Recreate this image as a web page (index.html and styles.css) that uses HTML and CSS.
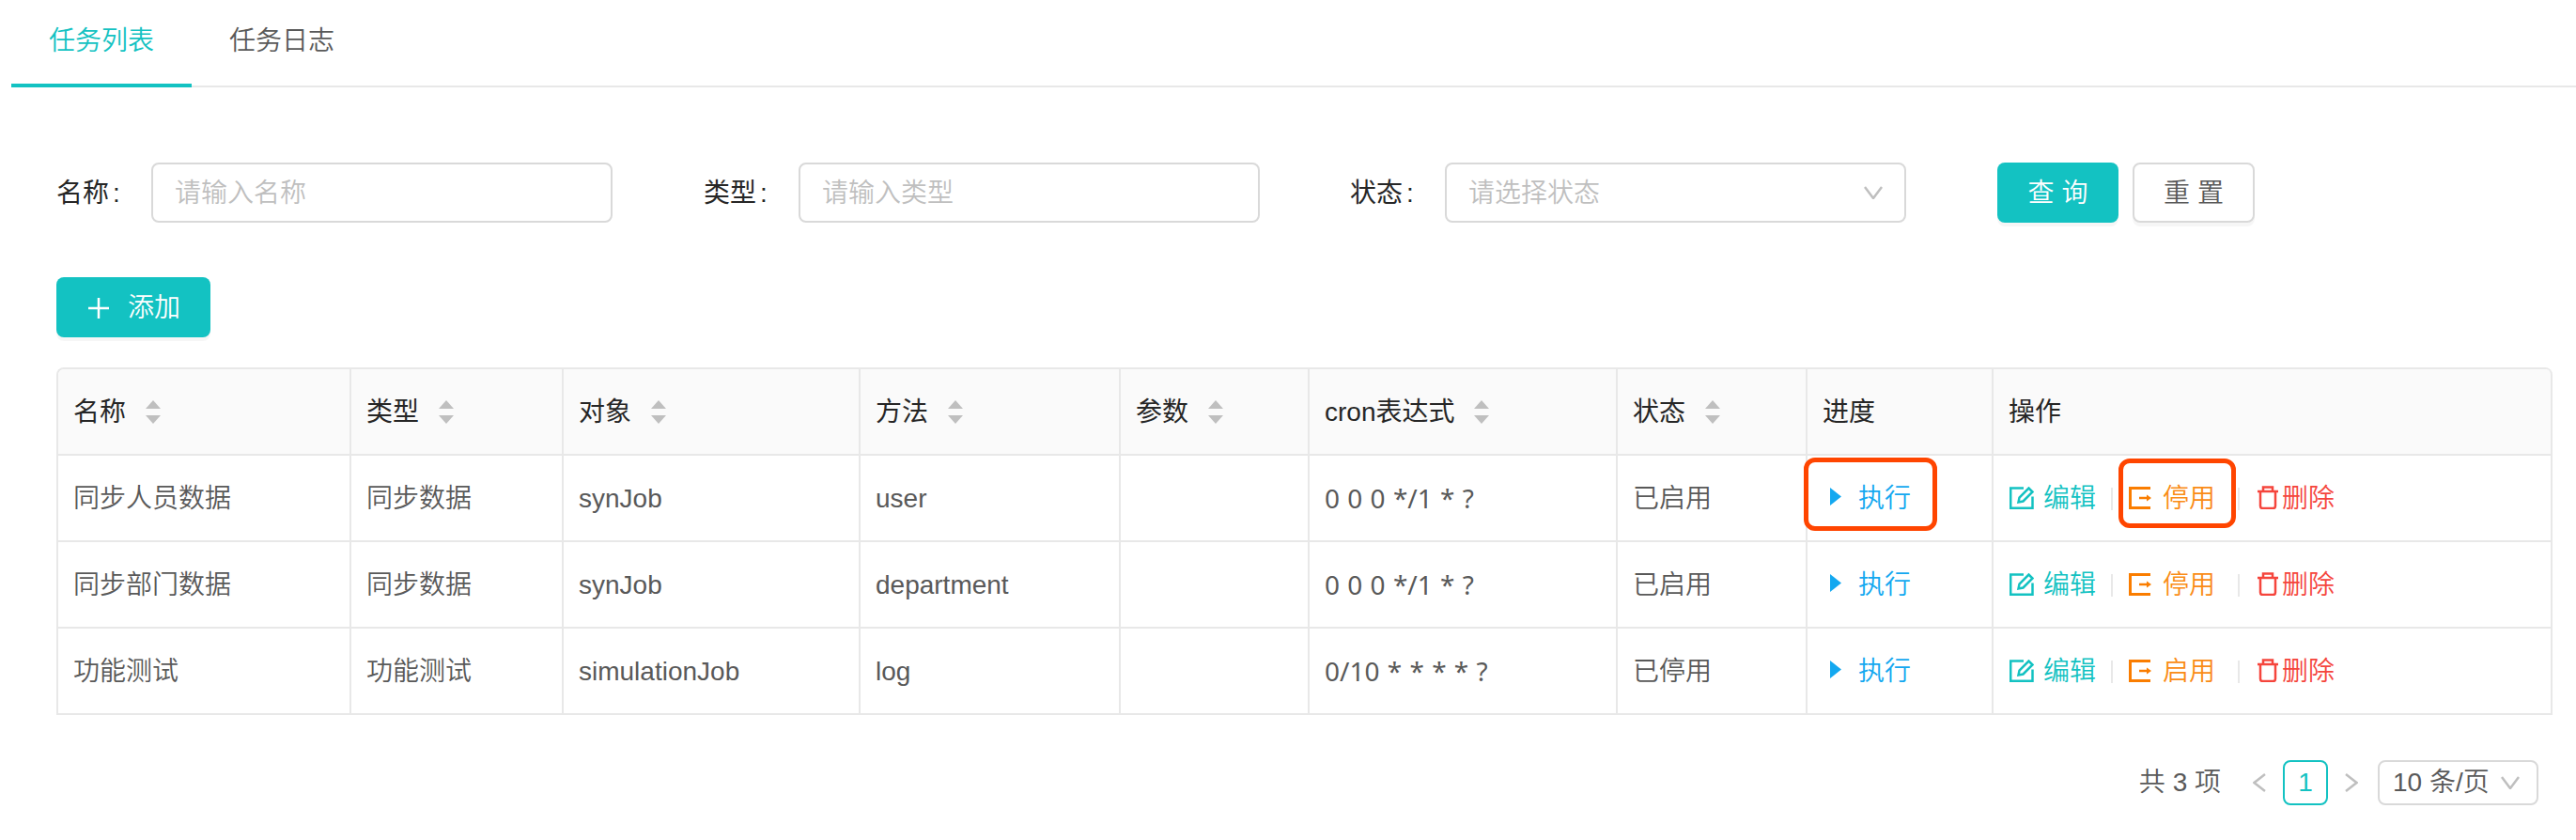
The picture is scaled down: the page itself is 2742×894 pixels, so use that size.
FILE: index.html
```html
<!DOCTYPE html>
<html lang="zh">
<head>
<meta charset="utf-8">
<title>任务列表</title>
<link rel="stylesheet" href="styles.css">
</head>
<body>
<svg class="defs" width="0" height="0" aria-hidden="true">
  <defs>
    <symbol id="sort" viewBox="0 0 16 25"><path d="M8 0 16 9H0Z"/><path d="M0 16H16L8 25Z"/></symbol>
    <symbol id="play" viewBox="0 0 12 19"><path d="M0 0 12 9.500 0 19Z"/></symbol>
    <symbol id="edit" viewBox="0 0 26 24"><path class="ln" d="M15 1.500H1.200V22.800H24.500V10.500"/><path class="ln" d="M9.500 16.500 10.500 11.500 20.500 1.500 24.500 5.500 14.500 15.500Z"/></symbol>
    <symbol id="exit" viewBox="0 0 24 24"><path class="ln3" d="M23 1.500H1.500V22.500H23"/><path class="ln2" d="M11 12H21"/><path d="M19 8.500 24 12 19 15.500Z"/></symbol>
    <symbol id="trash" viewBox="0 0 24 25"><path class="ln" d="M1 6H23"/><path class="ln" d="M7 6V1.500H17V6"/><path class="ln" d="M4 6V21.500Q4 24 6.500 24H17.500Q20 24 20 21.500V6"/></symbol>
    <symbol id="down" viewBox="0 0 20 14"><path class="ln" d="M1 1 10 13 19 1"/></symbol>
    <symbol id="left" viewBox="0 0 14 20"><path class="ln" d="M13 1 1.500 10 13 19"/></symbol>
    <symbol id="right" viewBox="0 0 14 20"><path class="ln" d="M1 1 12.500 10 1 19"/></symbol>
    <symbol id="plus" viewBox="0 0 22 22"><path class="ln" d="M11 0V22M0 11H22"/></symbol>
  </defs>
</svg>

<nav class="tabs">
  <a class="tab tab-active">任务列表</a>
  <a class="tab">任务日志</a>
</nav>

<main class="content">
  <form class="filters">
    <div class="field">
      <label class="field-label">名称<span class="colon">:</span></label>
      <div class="input"><span class="placeholder">请输入名称</span></div>
    </div>
    <div class="field">
      <label class="field-label">类型<span class="colon">:</span></label>
      <div class="input"><span class="placeholder">请输入类型</span></div>
    </div>
    <div class="field">
      <label class="field-label">状态<span class="colon">:</span></label>
      <div class="input input-select"><span class="placeholder">请选择状态</span><svg class="chev-select"><use href="#down"/></svg></div>
    </div>
    <div class="field-actions">
      <span class="btn btn-primary btn-query">查 询</span>
      <span class="btn btn-default btn-query">重 置</span>
    </div>
  </form>

  <div class="toolbar">
    <span class="btn btn-primary btn-add"><svg class="plus"><use href="#plus"/></svg>添加</span>
  </div>

  <div class="table-wrap">
    <table class="table">
      <colgroup>
        <col class="c1"><col class="c2"><col class="c3"><col class="c4"><col class="c5"><col class="c6"><col class="c7"><col class="c8"><col class="c9">
      </colgroup>
      <thead>
        <tr>
          <th><span class="th-in">名称<svg class="sort"><use href="#sort"/></svg></span></th>
          <th><span class="th-in">类型<svg class="sort"><use href="#sort"/></svg></span></th>
          <th><span class="th-in">对象<svg class="sort"><use href="#sort"/></svg></span></th>
          <th><span class="th-in">方法<svg class="sort"><use href="#sort"/></svg></span></th>
          <th><span class="th-in">参数<svg class="sort"><use href="#sort"/></svg></span></th>
          <th><span class="th-in">cron表达式<svg class="sort"><use href="#sort"/></svg></span></th>
          <th><span class="th-in">状态<svg class="sort"><use href="#sort"/></svg></span></th>
          <th>进度</th>
          <th>操作</th>
        </tr>
      </thead>
      <tbody>
        <tr>
          <td>同步人员数据</td><td>同步数据</td><td>synJob</td><td>user</td><td></td><td class="cron">0 0 0 */1 * ?</td><td>已启用</td>
          <td><span class="run"><svg class="i-play"><use href="#play"/></svg>执行</span></td>
          <td><div class="ops">
            <span class="op op-edit"><svg class="i-edit"><use href="#edit"/></svg>编辑</span><i class="sep sep-a"></i>
            <span class="op op-stop"><svg class="i-exit"><use href="#exit"/></svg>停用</span><i class="sep sep-b"></i>
            <span class="op op-del"><svg class="i-trash"><use href="#trash"/></svg>删除</span>
          </div></td>
        </tr>
        <tr>
          <td>同步部门数据</td><td>同步数据</td><td>synJob</td><td>department</td><td></td><td class="cron">0 0 0 */1 * ?</td><td>已启用</td>
          <td><span class="run"><svg class="i-play"><use href="#play"/></svg>执行</span></td>
          <td><div class="ops">
            <span class="op op-edit"><svg class="i-edit"><use href="#edit"/></svg>编辑</span><i class="sep sep-a"></i>
            <span class="op op-stop"><svg class="i-exit"><use href="#exit"/></svg>停用</span><i class="sep sep-b"></i>
            <span class="op op-del"><svg class="i-trash"><use href="#trash"/></svg>删除</span>
          </div></td>
        </tr>
        <tr>
          <td>功能测试</td><td>功能测试</td><td>simulationJob</td><td>log</td><td></td><td class="cron">0/10 * * * * ?</td><td>已停用</td>
          <td><span class="run"><svg class="i-play"><use href="#play"/></svg>执行</span></td>
          <td><div class="ops">
            <span class="op op-edit"><svg class="i-edit"><use href="#edit"/></svg>编辑</span><i class="sep sep-a"></i>
            <span class="op op-stop"><svg class="i-exit"><use href="#exit"/></svg>启用</span><i class="sep sep-b"></i>
            <span class="op op-del"><svg class="i-trash"><use href="#trash"/></svg>删除</span>
          </div></td>
        </tr>
      </tbody>
    </table>
    <div class="mark mark-run"></div>
    <div class="mark mark-stop"></div>
  </div>

  <div class="pager">
    <span class="pager-total">共 3 项</span>
    <svg class="pager-prev"><use href="#left"/></svg>
    <span class="pager-item">1</span>
    <svg class="pager-next"><use href="#right"/></svg>
    <span class="pager-size">10 条/页<svg class="chev-size"><use href="#down"/></svg></span>
  </div>
</main>
</body>
</html>
```

FILE: styles.css
```css
* { box-sizing: border-box; }
html, body { margin: 0; padding: 0; background: #fff; }
body {
  font-family: "Liberation Sans", "Noto Sans CJK SC", sans-serif;
  font-size: 28px;
  font-weight: 350;
  line-height: 44px;
  color: #595959;
}
.defs { position: absolute; }
svg { display: block; flex: none; fill: currentColor; }
.ln, .ln2, .ln3 { fill: none; stroke: currentColor; stroke-width: 2.5; }
.ln3 { stroke-width: 3; }

.tabs {
  display: flex;
  height: 93px;
  margin-left: 12px;
  border-bottom: 2px solid #e8e8e8;
}
.tab { height: 93px; padding: 22px 40px 0; }
.tab-active { color: #13c2c2; border-bottom: 4px solid #13c2c2; }

.content { padding: 80px 25px 0 60px; }

.filters { display: grid; grid-template-columns: 689px 688px 689px auto; height: 64px; }
.field { display: flex; align-items: center; }
.field-label { width: 101px; padding-top: 2px; color: #262626; font-weight: 400; flex: none; }
.colon { margin-left: 4px; }
.input {
  display: flex;
  align-items: center;
  justify-content: space-between;
  width: 491px;
  height: 64px;
  padding: 2px 23px 0;
  border: 2px solid #d9d9d9;
  border-radius: 8px;
}
.placeholder { color: #bfbfbf; }
.chev-select { width: 20px; height: 14px; margin-bottom: 2px; color: #bfbfbf; }
.field-actions { display: flex; gap: 15px; }

.btn {
  display: flex;
  align-items: center;
  justify-content: center;
  height: 64px;
  padding-top: 1px;
  border-radius: 8px;
  box-shadow: 0 4px 0 rgba(0, 0, 0, .035);
}
.btn-primary { background: #13c2c2; color: #fff; }
.btn-default { background: #fff; border: 2px solid #d9d9d9; color: #595959; }
.btn-query { width: 129px; }
.btn-default.btn-query { width: 130px; }
.btn-add { width: 164px; gap: 20px; padding-left: 2px; }
.plus { width: 22px; height: 22px; }

.toolbar { display: flex; margin-top: 58px; }

.table-wrap {
  position: relative;
  margin-top: 32px;
  border-top: 2px solid #e8e8e8;
  border-left: 2px solid #e8e8e8;
  border-radius: 8px 8px 0 0;
}
.table { width: 2655px; table-layout: fixed; border-collapse: separate; border-spacing: 0; }
.c1 { width: 312px; } .c2 { width: 226px; } .c3 { width: 316px; }
.c4 { width: 277px; } .c5 { width: 201px; } .c6 { width: 328px; }
.c7 { width: 202px; } .c8 { width: 198px; } .c9 { width: 595px; }
th, td {
  height: 92px;
  padding: 2px 16px 0;
  border-right: 2px solid #e8e8e8;
  border-bottom: 2px solid #e8e8e8;
  text-align: left;
  white-space: nowrap;
}
th { background: #fafafa; color: #262626; font-weight: 400; }
th:first-child { border-top-left-radius: 6px; }
th:last-child { border-top-right-radius: 6px; }
.th-in { display: inline-flex; align-items: center; gap: 21px; }
.sort { width: 16px; height: 25px; margin-bottom: 1px; color: #bfbfbf; }
td.cron { padding-top: 0; font-family: "Noto Sans", "Liberation Sans", sans-serif; font-weight: 400; word-spacing: 1px; }

.run { display: flex; align-items: center; gap: 18px; padding-left: 8px; color: #13a8f0; }
.i-play { width: 12px; height: 19px; margin-bottom: 5px; }

.ops { display: flex; align-items: center; padding-left: 1px; }
.op { display: flex; align-items: center; }
.op svg { margin-bottom: 3px; }
.op-edit { color: #13c2c2; gap: 10px; }
.op-stop { color: #fa8c16; gap: 12px; }
.op-del { color: #f5453c; gap: 3px; }
.i-edit { width: 26px; height: 24px; }
.i-exit { width: 24px; height: 24px; color: #fa7d00; }
.i-trash { width: 24px; height: 25px; }
.sep { display: block; width: 2px; height: 24px; background: #e8e8e8; }
.sep-a { margin: 0 17px 0 16px; }
.sep-b { margin: 0 18px 0 24px; }

.mark { position: absolute; border: 5px solid #ff4500; border-radius: 12px; }
.mark-run { left: 1858px; top: 94px; width: 142px; height: 78px; }
.mark-stop { left: 2193px; top: 95px; width: 125px; height: 74px; }

.pager {
  display: flex;
  align-items: center;
  justify-content: flex-end;
  height: 48px;
  margin-top: 48px;
  padding-right: 15px;
}
.pager-total { margin-right: 34px; }
.pager-prev, .pager-next { width: 14px; height: 20px; color: #bfbfbf; }
.pager-item {
  width: 48px;
  height: 48px;
  margin: 0 18px;
  border: 2px solid #13c2c2;
  border-radius: 8px;
  color: #13c2c2;
  text-align: center;
  line-height: 44px;
}
.pager-size {
  display: flex;
  align-items: center;
  justify-content: space-between;
  width: 171px;
  height: 48px;
  margin-left: 21px;
  padding: 0 18px 0 14px;
  border: 2px solid #d9d9d9;
  border-radius: 8px;
}
.chev-size { width: 20px; height: 14px; color: #bfbfbf; }
```
